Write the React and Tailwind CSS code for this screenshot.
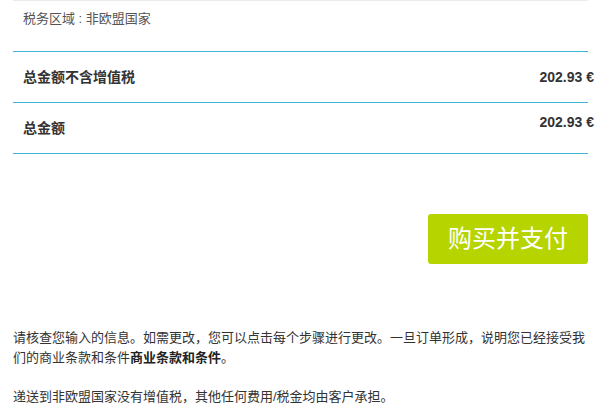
import React from "react";

const font = { fontFamily: '"Liberation Sans", "Noto Sans CJK SC", sans-serif' };

export default function App() {
  const total = "202.93 €";

  return (
    <div className="bg-white min-h-[417px] text-[#333]" style={font}>
      <div className="ml-[13px] w-[575px]">
        {/* tax region */}
        <div className="border-t border-[#ebebeb] h-[51px] pt-[8px] pl-[10px] text-[13px] leading-[20px] text-[#555]">
          税务区域 : 非欧盟国家
        </div>

        {/* totals */}
        <div className="border-t border-[#3fb5d5] h-[51px] flex items-center justify-between pl-[10px]">
          <span className="text-[14px] font-bold leading-[20px]">总金额不含增值税</span>
          <span className="text-[14px] font-bold leading-[20px] -mr-[6px]">{total}</span>
        </div>
        <div className="border-t border-b border-[#3fb5d5] h-[52px] flex items-center justify-between pl-[10px]">
          <span className="text-[14px] font-bold leading-[20px]">总金额</span>
          <span className="text-[14px] font-bold leading-[20px] -mr-[6px] self-start mt-[9px]">{total}</span>
        </div>

        <div className="flex justify-end mt-[60px]">
          <button className="w-[160px] h-[50px] rounded-[3px] bg-[#b5d400] text-white text-[24px] leading-none">
            购买并支付
          </button>
        </div>

        <p className="w-[587px] mt-[64px] text-[13px] leading-[20px] text-[#333]">
          请核查您输入的信息。如需更改，您可以点击每个步骤进行更改。一旦订单形成，说明您已经接受我
          <br />
          们的商业条款和条件<b className="text-[#222]">商业条款和条件</b>。
        </p>
        <p className="mt-[19px] text-[13px] leading-[20px] text-[#333]">
          递送到非欧盟国家没有增值税，其他任何费用/税金均由客户承担。
        </p>
      </div>
    </div>
  );
}
